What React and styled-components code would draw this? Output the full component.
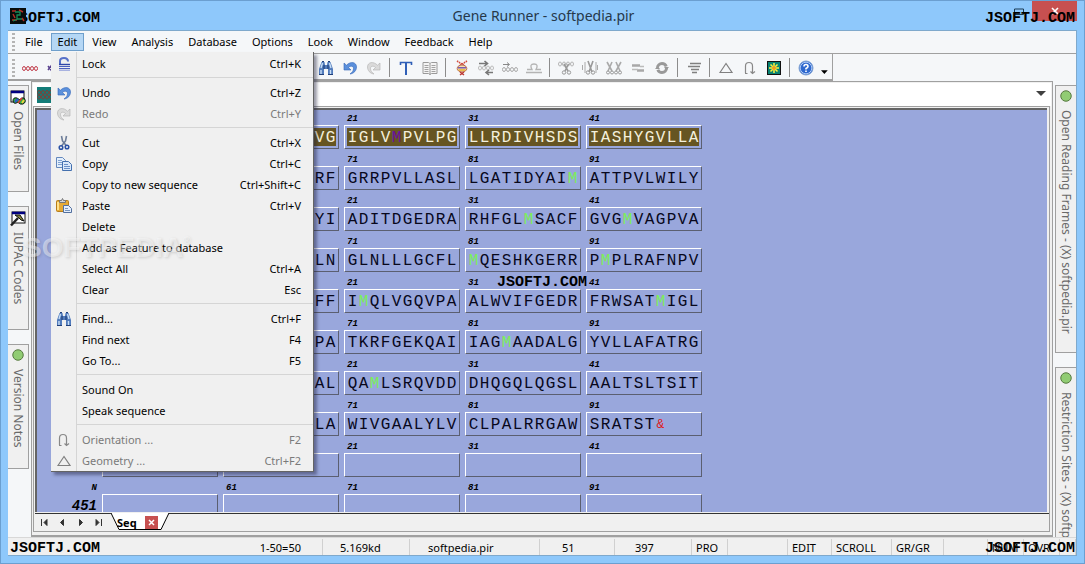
import React from "react";
import styled, { createGlobalStyle } from "styled-components";

const GlobalStyle = createGlobalStyle`
  * {
    box-sizing: border-box;
  }

  body {
    margin: 0;
    font-family: "Noto Sans", "Open Sans", sans-serif;
    font-size: 11px;
    color: #000;
  }

  button,
  select {
    font: inherit;
    color: inherit;
    margin: 0;
    padding: 0;
    border: 0;
    background: none;
  }

  svg {
    display: block;
    flex: none;
  }
`;

const AppWindow = styled.div`
  position: relative;
  height: 100vh;
  display: flex;
  flex-direction: column;
  padding: 0 7px 7px;
  background: #8ec8fb;
  border: 1px solid #6b9fd0;
  overflow: hidden;
`;

const TitleBar = styled.header`
  flex: none;
  display: flex;
  height: 29px;
  padding-left: 2px;
`;

const TitleSide = styled.div`
  flex: 1;
  display: flex;
  align-items: ${(props) => props.$align || "center"};
  justify-content: ${(props) => (props.$end ? "flex-end" : "flex-start")};
`;

const Title = styled.h1`
  margin: 0;
  font-size: 14px;
  font-weight: 400;
  line-height: 29px;
  color: #26384a;
`;

const WindowButton = styled.button`
  width: ${(props) => (props.$close ? "45px" : "26px")};
  height: 20px;
  display: flex;
  align-items: center;
  justify-content: center;
  background: ${(props) => (props.$close ? "#c75050" : "transparent")};
`;

const Client = styled.div`
  flex: 1;
  min-height: 0;
  display: flex;
  flex-direction: column;
  background: #f5f7f9;
  border: solid #7fa9cc;
  border-width: 1px 1px 1px 0;
`;

const MenuBar = styled.nav`
  flex: none;
  display: flex;
  align-items: center;
  gap: 1px;
  height: 23px;
  padding-left: 4px;
  border-bottom: 1px solid #a0a0a0;
`;

const Grip = styled.span`
  width: 3px;
  height: 18px;
  margin-right: 2px;
  background: repeating-linear-gradient(#b4b4b4 0 2px, transparent 2px 4px);
`;

const MenuTitle = styled.button`
  height: 18px;
  padding: 0 7px;
  line-height: 16px;
  outline: ${(props) => (props.$open ? "1px solid #6f9fcb" : "none")};
  outline-offset: -1px;
  background: ${(props) => (props.$open ? "#b5d7f5" : "transparent")};
`;

const Toolbar = styled.div`
  flex: none;
  align-self: flex-start;
  display: flex;
  align-items: center;
  width: 825px;
  height: 27px;
  padding: 2px 0 0 4px;
  border: solid #a0a0a0;
  border-width: 0 1px 2px 0;
`;

const ToolGroup = styled.div`
  display: flex;
  align-items: center;
  width: 296px;
  margin-left: 1px;
`;

const ToolButton = styled.button`
  flex: none;
  width: ${(props) => (props.$narrow ? "12px" : "24px")};
  height: 22px;
  display: flex;
  align-items: center;
  justify-content: center;
`;

const ToolDivider = styled.span`
  width: 1px;
  height: 19px;
  margin: 0 4px 0 3px;
  background: #8c8c8c;
`;

const Workspace = styled.div`
  flex: 1;
  min-height: 0;
  display: flex;
  gap: 2px;
`;

const SideTabs = styled.div`
  flex: none;
  width: 21px;
  display: flex;
  flex-direction: column;
  gap: 14px;
  padding-top: 4px;
  overflow: hidden;
`;

const SideTab = styled.button`
  flex: none;
  display: flex;
  align-items: center;
  gap: ${(props) => (props.$wideIcon ? "5px" : "8px")};
  height: ${(props) => props.$length};
  padding: 4px 0;
  writing-mode: vertical-rl;
  font-size: 12px;
  line-height: 18px;
  white-space: nowrap;
  color: #6a6a6a;
  background: #f0f0f0;
  border: 1px solid #a0a0a0;
  ${(props) => (props.$right ? "border-right: 0" : "border-left: 0")};
`;

const Document = styled.main`
  flex: 1;
  min-width: 0;
  display: flex;
  flex-direction: column;
  padding: 1px 1px 3px;
  border: solid #a0a0a0;
  border-width: 1px 1px 2px;
  background: #f0f0f0;
`;

const FeatureBar = styled.div`
  flex: none;
  position: relative;
  display: flex;
  align-items: center;
  height: 23px;
  padding-left: 4px;
  background: #fff;

  svg:last-child {
    position: absolute;
    right: 5px;
    top: 8px;
    pointer-events: none;
  }
`;

const FeatureSelect = styled.select`
  flex: 1;
  height: 21px;
  appearance: none;
  outline: none;
`;

const CanvasFrame = styled.section`
  flex: 1;
  min-height: 0;
  display: flex;
  flex-direction: column;
  margin-right: 1px;
  padding-left: 1px;
  border: 1px solid #a0a0a0;
`;

const Canvas = styled.div`
  flex: 1;
  min-height: 0;
  margin: 1px 2px 1px 0;
  overflow: hidden;
  background: #99a7dc;
  border: solid #646464;
  border-width: 2px 0 0 2px;
`;

const SequenceRow = styled.div`
  display: grid;
  grid-template-columns: 60px repeat(5, 116px);
  grid-template-rows: 15px 24px;
  column-gap: 5px;
  margin-bottom: 2px;
`;

const Position = styled.span`
  padding-left: 3px;
  text-align: ${(props) => (props.$gutter ? "right" : "left")};
  font: italic bold 9px/18px "Liberation Mono", monospace;
`;

const RowStart = styled.span`
  text-align: right;
  font: italic bold 14px/24px "Liberation Mono", monospace;
`;

const Block = styled.div`
  display: grid;
  grid-template-columns: repeat(10, 11px);
  padding: 2px;
  border: 1px solid;
  border-color: #fff #5b5f70 #5b5f70 #fff;
  font: 16px/20px "Courier New", "Liberation Mono", monospace;
  text-align: center;
`;

const residueColors = { M: "#7cee5a", "&": "#e01818" };

const Residue = styled.span`
  height: 18px;
  background: ${(props) => (props.$selected ? "#665522" : "transparent")};
  color: ${(props) =>
    props.$selected
      ? props.$code === "M"
        ? "#6a10a0"
        : "#f4f0dc"
      : residueColors[props.$code] || "#08081c"};
  font-size: ${(props) => (props.$code === "&" ? "13px" : "16px")};
`;

const SheetTabs = styled.div`
  flex: none;
  display: flex;
  align-items: flex-start;
  height: 18px;
  border-top: 1px solid #333;
`;

const SheetNav = styled.button`
  width: 18px;
  height: 17px;
  display: flex;
  align-items: center;
  justify-content: center;
`;

const SheetTab = styled.div`
  position: relative;
  display: flex;
  align-items: center;
  gap: 8px;
  height: 17px;
  margin-left: 4px;
  padding: 0 11px 0 6px;
  font-weight: 700;

  > svg {
    position: absolute;
    left: 0;
    top: -1px;
  }

  span,
  button {
    position: relative;
  }
`;

const SheetClose = styled.button`
  width: 13px;
  height: 13px;
  display: flex;
  align-items: center;
  justify-content: center;
  background: #c75050;
`;

const StatusBar = styled.footer`
  flex: none;
  display: flex;
  align-items: center;
  height: 18px;
  background: #f0f0f0;
  border-top: 1px solid #d8d8d8;
`;

const StatusCell = styled.span`
  flex: ${(props) => (props.$width ? `0 0 ${props.$width}` : "1")};
  height: 16px;
  padding: 0 ${(props) => (props.$width ? "0" : "21px")} 0
    ${(props) => props.$pad || "4px"};
  line-height: 18px;
  white-space: nowrap;
  text-align: ${(props) => (props.$width ? "left" : "right")};
  border-right: 1px solid #d0d0d0;
`;

const DropMenu = styled.div`
  position: absolute;
  left: 50px;
  top: 51px;
  z-index: 2;
  width: 263px;
  padding-top: 1px;
  background: linear-gradient(
    to right,
    #f0f0f0 25px,
    #d5d5d5 25px 26px,
    #f0f0f0 26px
  );
  border: solid #646464;
  border-width: 0 1px 1px 0;
  box-shadow: 3px 3px 3px rgba(30, 30, 60, 0.45);
`;

const MenuItem = styled.button`
  display: grid;
  grid-template-columns: 31px 1fr auto;
  align-items: center;
  width: 100%;
  height: 21px;
  padding-right: 12px;
  text-align: left;
  color: ${(props) => (props.disabled ? "#7a7a7a" : "#000")};

  svg {
    margin-left: 5px;
  }
`;

const MenuDivider = styled.hr`
  height: 8px;
  margin: 0 0 0 25px;
  border: 0;
  background: linear-gradient(#d5d5d5, #d5d5d5) 0 3px / 100% 1px no-repeat;
`;

const Stamp = styled.span`
  position: absolute;
  z-index: 3;
  left: ${(props) => props.$left};
  right: ${(props) => props.$right};
  top: ${(props) => props.$top};
  bottom: ${(props) => props.$bottom};
  font: bold 15px/16px "Liberation Mono", monospace;
  pointer-events: none;
`;

const Watermark = styled.span`
  position: absolute;
  z-index: 3;
  left: 22px;
  top: 229px;
  font: bold 28px/36px "Liberation Sans", sans-serif;
  color: rgba(255, 255, 255, 0.45);
  text-shadow: 1px 1px 3px rgba(0, 0, 0, 0.14);
  pointer-events: none;

  sup {
    font-size: 10px;
    line-height: 10px;
    vertical-align: 13px;
  }
`;

const AppIcon = styled.svg`
  position: relative;
  z-index: 4;
`;

// every small icon shares the same 16px artboard
const Icon = ({ children, size = 16 }) => (
  <svg width={size} height={size} viewBox="0 0 16 16" fill="none" aria-hidden="true">
    {children}
  </svg>
);

const Beads = ({ y, color }) => (
  <g stroke={color}>
    <ellipse cx="2" cy={y} rx="1.500" ry="2" />
    <ellipse cx="6" cy={y} rx="1.500" ry="2" />
    <ellipse cx="10" cy={y} rx="1.500" ry="2" />
    <ellipse cx="14" cy={y} rx="1.500" ry="2" />
  </g>
);

const icons = {
  lock: (
    <Icon>
      <path d="M4 8V5Q4 2 8 2Q12 2 12 5.500" stroke="#5670c8" strokeWidth="2" />
      <path d="M3 8.500h11" stroke="#2f46a8" strokeWidth="1.400" />
      <path d="M3 10.500h11M3 12.500h11" stroke="#4b5fbd" strokeWidth="1.200" />
      <path d="M3 14.200h11" stroke="#8796d8" />
    </Icon>
  ),
  undo: (
    <Icon>
      <path d="M2 3v7h7L6.500 7.500C8.500 5.500 11.500 5.800 11.500 8.500C11.500 11 10 12.500 8 14C12 13.500 14.500 10.500 14.500 7C14.500 2 8.500 1 4.500 5.200z" fill="#5b90dc" stroke="#3265b7" strokeWidth=".6" />
    </Icon>
  ),
  redo: (
    <Icon>
      <path d="M14 3v7H7l2.500-2.500C7.500 5.500 4.500 5.800 4.500 8.500C4.500 11 6 12.500 8 14C4 13.500 1.500 10.500 1.500 7C1.500 2 7.500 1 11.500 5.200z" fill="#dadada" stroke="#b0b0b0" strokeWidth=".6" />
    </Icon>
  ),
  cut: (
    <Icon>
      <path d="M5.500 1l1 5 4 5M10.500 1l-1 5-4 5" stroke="#6d7d99" strokeWidth="1.600" />
      <circle cx="5" cy="12.500" r="1.800" stroke="#2a51a5" strokeWidth="1.500" />
      <circle cx="11" cy="12" r="1.800" stroke="#2a51a5" strokeWidth="1.500" />
    </Icon>
  ),
  copy: (
    <Icon>
      <path d="M.5 1.500h6l3 3v7h-9z" fill="#e3eefb" stroke="#6488bd" />
      <path d="M2 4.500h4M2 6.500h5M2 8.500h5" stroke="#7fa2d2" />
      <path d="M6.500 5.500h6l3 3v6h-9z" fill="#d9e8fa" stroke="#4470ae" />
      <path d="M8 8.500h4M8 10.500h6M8 12.500h6" stroke="#6a90c8" />
    </Icon>
  ),
  paste: (
    <Icon>
      <rect x=".5" y="2.500" width="12" height="11" rx="1" fill="#e6aa35" stroke="#b77d19" />
      <path d="M2 4v8" stroke="#ffe08b" strokeWidth="2" />
      <path d="M3.500 4.500v-2h2l1-2l1 2h2v2z" fill="#d3d4d8" stroke="#777" />
      <path d="M7.500 7.500h5l3 3v4h-8z" fill="#e5eefb" stroke="#52709f" />
      <path d="M9 10.500h3M9 12.500h5" stroke="#7795be" />
    </Icon>
  ),
  find: (
    <Icon>
      <path d="M3.500 2h3l.5 3h2l.500-3h3l2.500 7v6h-5V9H6v6H1V9z" fill="#517bbc" />
      <path d="M4.500 3L3 8M11.500 3L13 8M3 10v4M12.500 10v4" stroke="#c8def5" strokeWidth="1.400" />
      <path d="M6 5v4M10 5v4M1 14.500h5M10 14.500h5M4 1.500h2M10 1.500h2" stroke="#203f7a" strokeWidth="1.200" />
    </Icon>
  ),
  orient: (
    <Icon>
      <path d="M3.500 13V6Q3.500 2.500 7 2.500Q10.500 2.500 10.500 6v7.500M8.500 11.500l2 2L13 11.500M3 13.500h2.500" stroke="#888" strokeWidth="1.200" />
    </Icon>
  ),
  geometry: (
    <Icon>
      <path d="M2 12.500L8 3.500L14 12.500z" stroke="#808080" strokeWidth="1.200" />
    </Icon>
  ),
  text: (
    <Icon>
      <path d="M2.500 5V2.500h11V5" stroke="#2f5fb7" strokeWidth="1.600" />
      <path d="M8 3v12" stroke="#2f5fb7" strokeWidth="2" />
    </Icon>
  ),
  book: (
    <Icon>
      <path d="M1 2.500h5.500L8 3.500l1.500-1H15v11H9.500L8 14.500l-1.500-1H1zM8 4v11" fill="#f4f4f4" stroke="#9a9a9a" />
      <path d="M2.500 5.500h4M2.500 7.500h4M2.500 9.500h4M2.500 11.500h4M9.500 5.500h4M9.500 7.500h4M9.500 9.500h4M9.500 11.500h4" stroke="#a2a2a2" />
    </Icon>
  ),
  helix: (
    <Icon>
      <path d="M3 1l8 5M13 1L5 6" stroke="#d34b3d" strokeWidth="1.600" strokeDasharray="1.500 .7" />
      <ellipse cx="8" cy="8.500" rx="4.800" ry="3.500" fill="#f6e3ae" stroke="#b8674e" />
      <path d="M4 7.800h8" stroke="#6744af" strokeWidth="1.300" />
      <path d="M4.500 10h7" stroke="#e2a920" strokeWidth="1.300" />
      <path d="M6 12l4 3M10 12l-4 3" stroke="#bd3a34" strokeWidth="1.500" />
    </Icon>
  ),
  strandBoth: (
    <Icon>
      <Beads y="8" color="#bbb" />
      <path d="M1 3.500h8M6.500 1l3 2.500L6.500 6M15 12.500H9M11 10l-3 2.500L11 15" stroke="#777" strokeWidth="1.600" />
    </Icon>
  ),
  strand: (
    <Icon>
      <path d="M1 4.500h6M5 2.500l2.500 2L5 6.500" stroke="#888" />
      <Beads y="9.500" color="#aaa" />
    </Icon>
  ),
  scale: (
    <Icon>
      <path d="M0 12.500h16M1 9.500h5Q3 4 8 4T10 9.500h5" stroke="#b4b4b4" strokeWidth="1.300" />
    </Icon>
  ),
  cutStrand: (
    <Icon>
      <Beads y="4" color="#b4b4b4" />
      <path d="M10.500 4L7 11M6 4l4 7" stroke="#999" strokeWidth="1.600" />
      <circle cx="6" cy="12.500" r="1.700" stroke="#999" />
      <circle cx="11" cy="12.500" r="1.700" stroke="#999" />
    </Icon>
  ),
  cutEnds: (
    <Icon>
      <path d="M3 2v11M14 2v11M.5 5v5M15.500 5v5" stroke="#aaa" />
      <path d="M11 1L7 12M6 1l4 11" stroke="#999" strokeWidth="1.600" />
      <circle cx="6" cy="12.500" r="1.700" stroke="#999" />
      <circle cx="11" cy="12.500" r="1.700" stroke="#999" />
    </Icon>
  ),
  cutTwice: (
    <Icon>
      <path d="M1 2l5 9M6 2l-4 9M10 2l4 9M15 2l-5 9" stroke="#aaa" strokeWidth="1.600" />
      <circle cx="2" cy="12.500" r="1.500" stroke="#999" />
      <circle cx="6" cy="12.500" r="1.500" stroke="#999" />
      <circle cx="10" cy="12.500" r="1.500" stroke="#999" />
      <circle cx="14" cy="12.500" r="1.500" stroke="#999" />
    </Icon>
  ),
  swap: (
    <Icon>
      <path d="M2 5.500h8M7 10.500h7" stroke="#a8a8a8" strokeWidth="2.600" />
      <path d="M10 6.500h4M2 9.500h6" stroke="#bbb" strokeWidth="1.500" />
    </Icon>
  ),
  ring: (
    <Icon>
      <circle cx="8" cy="8" r="4.500" stroke="#999" strokeWidth="3" strokeDasharray="12 2" />
      <path d="M1 9h5l-2.500-3zM10 7h5l-2.500 3z" fill="#999" />
    </Icon>
  ),
  align: (
    <Icon>
      <path d="M4 3.500h11M2 6.500h12M5 9.500h8M6 12.500h5" stroke="#808080" strokeWidth="1.600" />
    </Icon>
  ),
  flower: (
    <Icon>
      <rect x="1.500" y="1.500" width="13" height="13" fill="#078272" stroke="#111" />
      <path d="M8 3v10M3 8h10M4.500 4.500l7 7M11.500 4.500l-7 7" stroke="#fff13b" strokeWidth="1.500" />
      <circle cx="8" cy="8" r="2" fill="#e99b22" />
    </Icon>
  ),
  help: (
    <Icon>
      <circle cx="8" cy="8" r="7" fill="#2e68ce" stroke="#7fa1d1" />
      <circle cx="8" cy="8" r="5.800" stroke="#cce0ff" strokeWidth=".8" />
      <path d="M6 6.500Q6 4.500 8 4.500T10 6.500Q10 7.500 8 8.500v1M8 10.500v1.500" stroke="#fff" strokeWidth="1.600" />
    </Icon>
  ),
  more: (
    <Icon size={12}>
      <path d="M4 11h9l-4.500 5z" fill="#000" />
    </Icon>
  ),
  dna: (
    <Icon>
      <Beads y="8.500" color="#c03a48" />
    </Icon>
  ),
  dnaPurple: (
    <Icon>
      <path d="M2 6l3 4l3-4l3 4M2 10l3-4l3 4l3-4" stroke="#59418f" strokeWidth="1.500" />
    </Icon>
  ),
  files: (
    <Icon>
      <rect x="1" y="1" width="13" height="11" fill="#fff" stroke="#111" />
      <path d="M1 2h13" stroke="#000080" strokeWidth="2.500" />
      <path d="M3 11q0-4 4-3l3 2q1-3 4-2q3 4-1 6q-3 1-5-2q-4 3-5-1z" fill="#2dac48" stroke="#111" />
      <path d="M5 12l3-3" stroke="#3151d0" strokeWidth="2" />
      <path d="M8 13l4-5" stroke="#dd3333" strokeWidth="1.500" />
      <path d="M12 13l2-3" stroke="#ecd43b" strokeWidth="2" />
    </Icon>
  ),
  hammer: (
    <Icon>
      <rect x="2" y="1" width="13" height="11" fill="#fff" stroke="#111" />
      <path d="M2 2h13" stroke="#000080" strokeWidth="2.500" />
      <path d="M1 14.500L8 7" stroke="#222" strokeWidth="2.500" />
      <path d="M5 4h5l4 6l-3-1l-2-2z" fill="#85853c" stroke="#111" />
    </Icon>
  ),
  dot: (
    <Icon size={12}>
      <circle cx="8" cy="8" r="7" fill="#91cc73" stroke="#55773f" strokeWidth="1.300" />
    </Icon>
  ),
};

const menuTitles = [
  "File", "Edit", "View", "Analysis", "Database",
  "Options", "Look", "Window", "Feedback", "Help",
];

const editMenu = [
  { label: "Lock", keys: "Ctrl+K", icon: "lock" },
  null,
  { label: "Undo", keys: "Ctrl+Z", icon: "undo" },
  { label: "Redo", keys: "Ctrl+Y", icon: "redo", disabled: true },
  null,
  { label: "Cut", keys: "Ctrl+X", icon: "cut" },
  { label: "Copy", keys: "Ctrl+C", icon: "copy" },
  { label: "Copy to new sequence", keys: "Ctrl+Shift+C" },
  { label: "Paste", keys: "Ctrl+V", icon: "paste" },
  { label: "Delete" },
  { label: "Add as Feature to database" },
  { label: "Select All", keys: "Ctrl+A" },
  { label: "Clear", keys: "Esc" },
  null,
  { label: "Find...", keys: "Ctrl+F", icon: "find" },
  { label: "Find next", keys: "F4" },
  { label: "Go To...", keys: "F5" },
  null,
  { label: "Sound On" },
  { label: "Speak sequence" },
  null,
  { label: "Orientation ...", keys: "F2", icon: "orient", disabled: true },
  { label: "Geometry ...", keys: "Ctrl+F2", icon: "geometry", disabled: true },
];

const tools = [
  "find", "undo", "redo", null, "text", "book", null,
  "helix", "strandBoth", "strand", "scale", null,
  "cutStrand", "cutEnds", "cutTwice", "swap", "ring", null,
  "align", null, "geometry", "orient", "flower", null, "help", "more",
];

const sequence = [
  { blocks: ["", "VG", "IGLVMPVLPG", "LLRDIVHSDS", "IASHYGVLLA"], selected: true },
  { blocks: ["", "RF", "GRRPVLLASL", "LGATIDYAIM", "ATTPVLWILY"] },
  { blocks: ["", "YI", "ADITDGEDRA", "RHFGLMSACF", "GVGMVAGPVA"] },
  { blocks: ["", "LN", "GLNLLLGCFL", "MQESHKGERR", "PMPLRAFNPV"] },
  { blocks: ["", "FF", "IMQLVGQVPA", "ALWVIFGEDR", "FRWSATMIGL"] },
  { blocks: ["", "PA", "TKRFGEKQAI", "IAGMAADALG", "YVLLAFATRG"] },
  { blocks: ["", "AL", "QAMLSRQVDD", "DHQGQLQGSL", "AALTSLTSIT"] },
  { blocks: ["", "LA", "WIVGAALYLV", "CLPALRRGAW", "SRATST&"] },
  { blocks: ["", "", "", "", ""] },
  { blocks: ["", "", "", "", ""], start: "451", mark: "N" },
];

const statusCells = [
  { text: "1-50=50" },
  { text: "5.169kd", width: "87px", pad: "17px" },
  { text: "softpedia.pir", width: "130px", pad: "18px" },
  { text: "51", width: "75px", pad: "22px" },
  { text: "397", width: "77px", pad: "20px" },
  { text: "PRO", width: "36px" },
  { text: "", width: "60px" },
  { text: "EDIT", width: "44px" },
  { text: "SCROLL", width: "60px" },
  { text: "GR/GR", width: "52px" },
  { text: "", width: "44px" },
  { text: "NUM", width: "36px" },
  { text: "OVR", width: "36px" },
  { text: "", width: "16px" },
];

const sheetNav = [
  { name: "First", d: "M1.500 1v7M7 1.500v6L4 4.500z" },
  { name: "Previous", d: "M5.500 1.500v6L2.500 4.500z" },
  { name: "Next", d: "M3.500 1.500v6L6.500 4.500z" },
  { name: "Last", d: "M7.500 1v7M2 1.500v6L5 4.500z" },
];

const SequenceLine = ({ row, index }) => {
  const base = index % 2 ? 51 : 1;

  return (
    <SequenceRow>
      <Position $gutter>{row.mark}</Position>
      {row.blocks.map((_, i) => (
        <Position key={i}>
          {i > 1 || (i === 1 && row.mark) ? base + i * 10 : ""}
        </Position>
      ))}
      <RowStart>{row.start}</RowStart>
      {row.blocks.map((block, i) => (
        <Block key={i}>
          {(i === 1 ? block.padStart(10) : block).split("").map((code, n) => (
            <Residue key={n} $code={code} $selected={row.selected}>
              {code}
            </Residue>
          ))}
        </Block>
      ))}
    </SequenceRow>
  );
};

const App = () => {
  return (
    <>
      <GlobalStyle />
      <AppWindow>
        <TitleBar>
          <TitleSide>
            <AppIcon width="16" height="16" viewBox="0 0 16 16">
              <rect width="16" height="16" fill="#070d0b" />
              <path d="M2 3h4M3 6l2 4M2 12h5M9 2l4 2M12 10l2 3" stroke="#b42c24" strokeWidth="1.500" />
              <path d="M5 4h5v3H7v4h5M3 13l5-2" stroke="#168b58" strokeWidth="1.300" fill="none" />
            </AppIcon>
          </TitleSide>
          <Title>Gene Runner - softpedia.pir</Title>
          <TitleSide $end $align="flex-start">
            <WindowButton aria-label="Maximize">
              <svg width="10" height="7">
                <path d="M.5 1h9v5.500h-9z" fill="none" stroke="#1b3a52" />
              </svg>
            </WindowButton>
            <WindowButton $close aria-label="Close">
              <svg width="8" height="8">
                <path d="M1 1l6 6M7 1L1 7" stroke="#fff" strokeWidth="1.600" />
              </svg>
            </WindowButton>
          </TitleSide>
        </TitleBar>

        <Client>
          <MenuBar>
            <Grip />
            {menuTitles.map((title) => (
              <MenuTitle key={title} $open={title === "Edit"}>
                {title}
              </MenuTitle>
            ))}
          </MenuBar>

          <Toolbar>
            <Grip />
            <ToolGroup>
              <ToolButton aria-label="dna">{icons.dna}</ToolButton>
              <ToolButton aria-label="protein">{icons.dnaPurple}</ToolButton>
            </ToolGroup>
            {tools.map((tool, i) =>
              tool ? (
                <ToolButton key={i} aria-label={tool} $narrow={tool === "more"}>
                  {icons[tool]}
                </ToolButton>
              ) : (
                <ToolDivider key={i} />
              )
            )}
          </Toolbar>

          <Workspace>
            <SideTabs>
              <SideTab $wideIcon $length="107px">{icons.files}Open Files</SideTab>
              <SideTab $wideIcon $length="124px">{icons.hammer}IUPAC Codes</SideTab>
              <SideTab $length="125px">{icons.dot}Version Notes</SideTab>
            </SideTabs>

            <Document>
              <FeatureBar>
                <svg width="16" height="16" viewBox="0 0 16 16" aria-hidden="true">
                  <rect width="16" height="16" fill="#137c78" />
                  <g fill="none">
                    <Beads y="5.500" color="#7c4139" />
                    <Beads y="10" color="#7c4139" />
                  </g>
                </svg>
                <FeatureSelect aria-label="Feature">
                  <option></option>
                </FeatureSelect>
                <svg width="10" height="5">
                  <path d="M0 0h10l-5 5z" fill="#404040" />
                </svg>
              </FeatureBar>

              <CanvasFrame>
                <Canvas>
                  {sequence.map((row, i) => (
                    <SequenceLine key={i} row={row} index={i} />
                  ))}
                </Canvas>
                <SheetTabs>
                  {sheetNav.map((nav) => (
                    <SheetNav key={nav.name} aria-label={nav.name}>
                      <svg width="9" height="9">
                        <path d={nav.d} fill="#333" stroke="#333" />
                      </svg>
                    </SheetNav>
                  ))}
                  <SheetTab>
                    <svg width="60" height="18">
                      <path d="M0 0L8 16.500H50L58 0" fill="#fff" stroke="#000" />
                    </svg>
                    <span>Seq</span>
                    <SheetClose aria-label="Close sheet">
                      <svg width="7" height="7">
                        <path d="M1 1l5 5M6 1L1 6" stroke="#fff" strokeWidth="1.500" />
                      </svg>
                    </SheetClose>
                  </SheetTab>
                </SheetTabs>
              </CanvasFrame>
            </Document>

            <SideTabs>
              <SideTab $right $length="268px">
                {icons.dot}Open Reading Frames - (X) softpedia.pir
              </SideTab>
              <SideTab $right $length="268px">
                {icons.dot}Restriction Sites - (X) softp
              </SideTab>
            </SideTabs>
          </Workspace>

          <StatusBar>
            {statusCells.map((cell, i) => (
              <StatusCell key={i} $width={cell.width} $pad={cell.pad}>
                {cell.text}
              </StatusCell>
            ))}
          </StatusBar>
        </Client>

        <DropMenu>
          {editMenu.map((item, i) =>
            item ? (
              <MenuItem key={i} disabled={item.disabled}>
                <span>{icons[item.icon]}</span>
                <span>{item.label}</span>
                <span>{item.keys}</span>
              </MenuItem>
            ) : (
              <MenuDivider key={i} />
            )
          )}
        </DropMenu>

        <Watermark>
          SOFTPEDIA<sup>®</sup>
        </Watermark>
        <Stamp $left="9px" $top="10px">JSOFTJ.COM</Stamp>
        <Stamp $right="9px" $top="10px">JSOFTJ.COM</Stamp>
        <Stamp $left="496px" $top="274px">JSOFTJ.COM</Stamp>
        <Stamp $left="9px" $bottom="6px">JSOFTJ.COM</Stamp>
        <Stamp $right="9px" $bottom="6px">JSOFTJ.COM</Stamp>
      </AppWindow>
    </>
  );
};

export default App;
